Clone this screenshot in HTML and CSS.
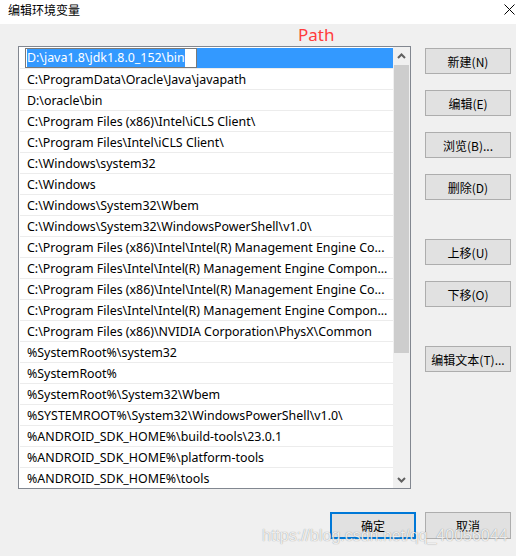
FILE: index.html
```html
<!DOCTYPE html>
<html lang="zh-CN">
<head>
<meta charset="utf-8">
<title>编辑环境变量</title>
<link rel="stylesheet" href="styles.css">
</head>
<body>
<div class="window">
  <div class="titlebar">
    <span class="title">编辑环境变量</span>
    <svg class="close" width="11" height="11" viewBox="0 0 11 11"><path d="M0.5 0.5 L10.5 10.5 M10.5 0.5 L0.5 10.5" stroke="#000" stroke-width="1"/></svg>
  </div>
  <div class="main">
    <div class="left">
      <div class="label">Path</div>
      <div class="list">
        <div class="rows">
          <div class="row selected">
            <div class="editbox"><span class="seltext">D:\java1.8\jdk1.8.0_152\bin</span></div>
            <div class="hl"></div>
          </div>
          <div class="row">C:\ProgramData\Oracle\Java\javapath</div>
          <div class="row">D:\oracle\bin</div>
          <div class="row">C:\Program Files (x86)\Intel\iCLS Client\</div>
          <div class="row">C:\Program Files\Intel\iCLS Client\</div>
          <div class="row">C:\Windows\system32</div>
          <div class="row">C:\Windows</div>
          <div class="row">C:\Windows\System32\Wbem</div>
          <div class="row">C:\Windows\System32\WindowsPowerShell\v1.0\</div>
          <div class="row">C:\Program Files (x86)\Intel\Intel(R) Management Engine Co...</div>
          <div class="row">C:\Program Files\Intel\Intel(R) Management Engine Compon...</div>
          <div class="row">C:\Program Files (x86)\Intel\Intel(R) Management Engine Co...</div>
          <div class="row">C:\Program Files\Intel\Intel(R) Management Engine Compon...</div>
          <div class="row">C:\Program Files (x86)\NVIDIA Corporation\PhysX\Common</div>
          <div class="row">%SystemRoot%\system32</div>
          <div class="row">%SystemRoot%</div>
          <div class="row">%SystemRoot%\System32\Wbem</div>
          <div class="row">%SYSTEMROOT%\System32\WindowsPowerShell\v1.0\</div>
          <div class="row">%ANDROID_SDK_HOME%\build-tools\23.0.1</div>
          <div class="row">%ANDROID_SDK_HOME%\platform-tools</div>
          <div class="row last">%ANDROID_SDK_HOME%\tools</div>
        </div>
        <div class="scrollbar">
          <div class="arrow">
            <svg width="9" height="6" viewBox="0 0 9 6"><path d="M1 5 L4.5 1.5 L8 5" fill="none" stroke="#606060" stroke-width="2"/></svg>
          </div>
          <div class="track">
            <div class="thumb"></div>
          </div>
          <div class="arrow">
            <svg width="9" height="6" viewBox="0 0 9 6"><path d="M1 1 L4.5 4.5 L8 1" fill="none" stroke="#606060" stroke-width="2"/></svg>
          </div>
        </div>
      </div>
    </div>
    <div class="buttons">
      <button class="btn">新建(N)</button>
      <button class="btn">编辑(E)</button>
      <button class="btn">浏览(B)...</button>
      <button class="btn">删除(D)</button>
      <button class="btn group">上移(U)</button>
      <button class="btn">下移(O)</button>
      <button class="btn group">编辑文本(T)...</button>
    </div>
  </div>
  <div class="footer">
    <button class="btn default">确定</button>
    <button class="btn">取消</button>
  </div>
  <div class="watermark">https://blog.csdn.net/qq_40056044</div>
</div>
</body>
</html>
```
FILE: styles.css
```css
* { box-sizing: border-box; }
html, body { margin: 0; padding: 0; }
body {
  width: 516px;
  height: 556px;
  background: #f0f0f0;
  font-family: "Noto Sans", "Noto Sans CJK SC", sans-serif;
  font-size: 12px;
  color: #000;
  overflow: hidden;
}
.window {
  position: relative;
  width: 516px;
  height: 556px;
}
.titlebar {
  height: 24px;
  background: #fff;
  display: flex;
  justify-content: space-between;
  align-items: flex-start;
  padding: 0 1px 0 8px;
}
.title {
  font-family: "Noto Sans CJK SC", sans-serif;
  font-size: 12px;
  line-height: 20px;
}
.close { margin-top: 4px; margin-right: 0; }
.main {
  display: flex;
  padding-left: 18px;
  gap: 14px;
}
.left { width: 393px; }
.label {
  height: 22px;
  line-height: 22px;
  padding-left: 280px;
  color: #ff3c3c;
  font-family: "Noto Sans", sans-serif;
  font-size: 17px;
}
.list {
  width: 393px;
  height: 443px;
  border: 1px solid #828790;
  background: #fff;
  display: flex;
}
.rows {
  flex: 1;
  padding-top: 1px;
  overflow: hidden;
}
.row {
  height: 21px;
  line-height: 21px;
  border-bottom: 1px solid #ececec;
  padding-left: 7px;
  white-space: nowrap;
  overflow: hidden;
  margin-left: 1px;
  font-size: 12.4px;
}
.row.last { border-bottom: none; }
.row.selected {
  display: flex;
  padding-left: 5px;
  border-bottom-color: #ececec;
}
.editbox {
  height: 20px;
  width: 172px;
  border: 1px solid #7a7a7a;
  background: #fff;
  padding-left: 1px;
  display: flex;
  align-items: center;
}
.seltext {
  background: #3399ff;
  color: #fff;
  line-height: 18px;
  height: 18px;
}
.hl {
  flex: 1;
  height: 20px;
  background: #3399ff;
}
.scrollbar {
  width: 17px;
  background: #f0f0f0;
  display: flex;
  flex-direction: column;
}
.arrow {
  height: 17px;
  display: flex;
  align-items: center;
  justify-content: center;
}
.track {
  flex: 1;
  padding: 1px 1px 0 1px;
}
.thumb {
  height: 288px;
  background: #cdcdcd;
}
.buttons {
  display: flex;
  flex-direction: column;
  gap: 16px;
  padding-top: 24px;
}
.btn {
  width: 86px;
  height: 26px;
  background: #e1e1e1;
  border: 1px solid #adadad;
  font-family: "Noto Sans CJK SC", sans-serif;
  font-size: 12px;
  color: #000;
  padding: 0;
  margin: 0;
}
.btn.group { margin-top: 23px; }
.footer {
  display: flex;
  justify-content: flex-end;
  gap: 9px;
  padding-right: 5px;
  margin-top: 23px;
}
.footer .btn { height: 27px; }
.btn.default { border: 2px solid #0078d7; }
.watermark {
  position: absolute;
  left: 262px;
  top: 528px;
  font-family: "Liberation Sans", sans-serif;
  font-size: 16px;
  line-height: 16px;
  color: rgba(255, 255, 255, 0.85);
  text-shadow: 0 0 1px rgba(0, 0, 0, 0.45);
  white-space: nowrap;
}
```
